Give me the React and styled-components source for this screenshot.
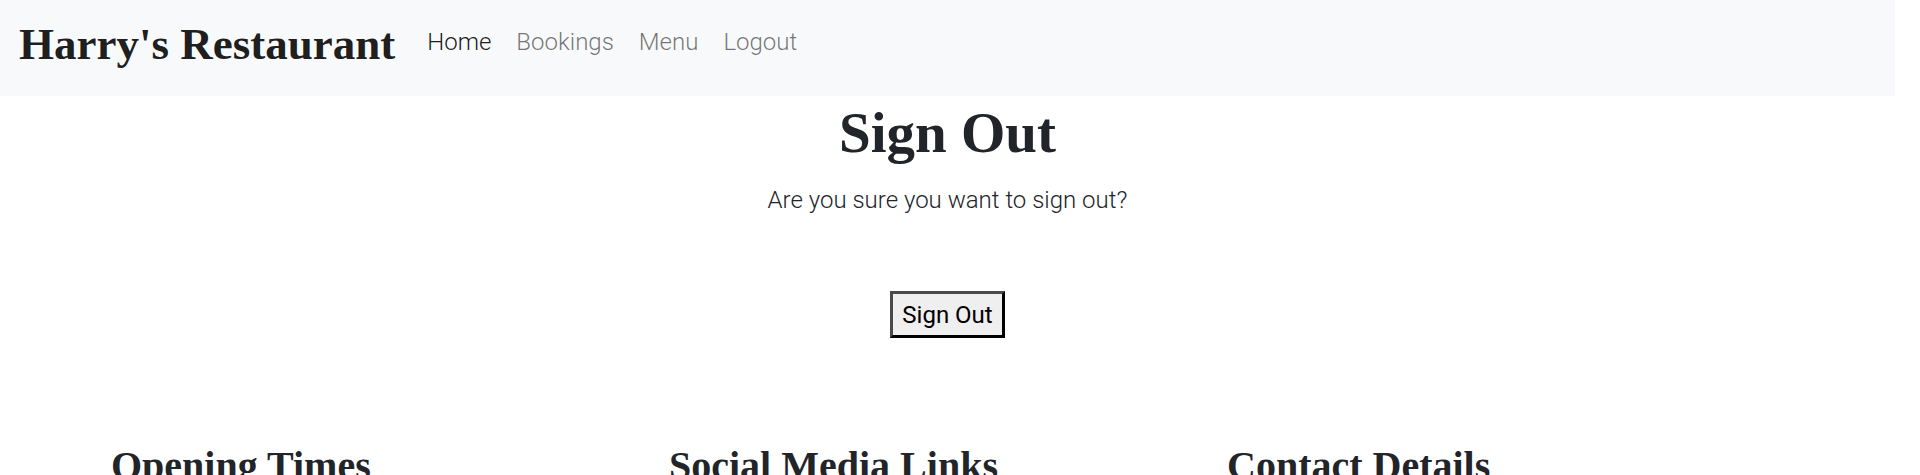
import React from 'react'
import styled, { createGlobalStyle } from 'styled-components'

const GlobalStyle = createGlobalStyle`
	html, body {
		margin: 0;
		padding: 0;
		background: #fff;
	}
	body {
		font-family: "Roboto", "Liberation Sans", sans-serif;
		color: #212529;
	}
`

const links = [
	{ label: 'Home', active: true },
	{ label: 'Bookings' },
	{ label: 'Menu' },
	{ label: 'Logout' },
]

const columns = ['Opening Times', 'Social Media Links', 'Contact Details']

function App() {
	return (
		<Page>
			<GlobalStyle />
			<Navbar>
				<Brand>Harry's Restaurant</Brand>
				<NavList>
					{links.map((link) => (
						<NavLink key={link.label} active={link.active ? 1 : 0}>
							{link.label}
						</NavLink>
					))}
				</NavList>
			</Navbar>
			<Main>
				<Title>Sign Out</Title>
				<Lead>Are you sure you want to sign out?</Lead>
				<Button>Sign Out</Button>
			</Main>
			<Footer>
				{columns.map((col) => (
					<FooterCol key={col}>
						<FooterTitle>{col}</FooterTitle>
					</FooterCol>
				))}
			</Footer>
		</Page>
	)
}

// leaves room on the right as the browser's scrollbar does in the page
const Page = styled.div`
	margin-right: 25px;
`
const Navbar = styled.nav`
	display: flex;
	align-items: center;
	height: 96px;
	padding: 0 19px;
	background: #f8f9fa;
	box-sizing: border-box;
`
const Brand = styled.a`
	font-family: "Liberation Serif", serif;
	font-weight: 700;
	font-size: 45px;
	color: rgba(0, 0, 0, 0.9);
	margin-right: 32px;
	padding-bottom: 8px;
`
const NavList = styled.div`
	display: flex;
	align-items: center;
	column-gap: 25px;
	margin-top: -13px;
`
const NavLink = styled.a`
	font-family: "Roboto", sans-serif;
	font-weight: 300;
	font-size: 24px;
	color: ${props => props.active ? 'rgba(0, 0, 0, 0.9)' : 'rgba(0, 0, 0, 0.55)'};
	cursor: pointer;
`
const Main = styled.main`
	display: flex;
	flex-direction: column;
	align-items: center;
	text-align: center;
`
const Title = styled.h1`
	font-family: "Liberation Serif", serif;
	font-weight: 700;
	font-size: 57px;
	line-height: 1.2;
	margin: 3px 0 0;
	color: #212529;
`
const Lead = styled.p`
	font-family: "Roboto", sans-serif;
	font-weight: 300;
	font-size: 24px;
	line-height: 1.5;
	margin: 15px 0 0;
	color: #212529;
`
const Button = styled.button`
	margin-top: 73px;
	height: 47px;
	padding: 0 9px;
	font-family: "Roboto", sans-serif;
	font-size: 24px;
	color: #000;
	background: #efefef;
	border: 3px solid;
	border-color: #4a4a4a #000 #000 #4a4a4a;
	cursor: pointer;
`
const Footer = styled.footer`
	display: grid;
	grid-template-columns: repeat(3, 558px);
	padding: 104px 99px 40px;
`
const FooterCol = styled.div`
	padding: 0 12px;
`
const FooterTitle = styled.h2`
	font-family: "Liberation Serif", serif;
	font-weight: 700;
	font-size: 40px;
	line-height: 1.2;
	margin: 0;
	color: #212529;
`

export default App
